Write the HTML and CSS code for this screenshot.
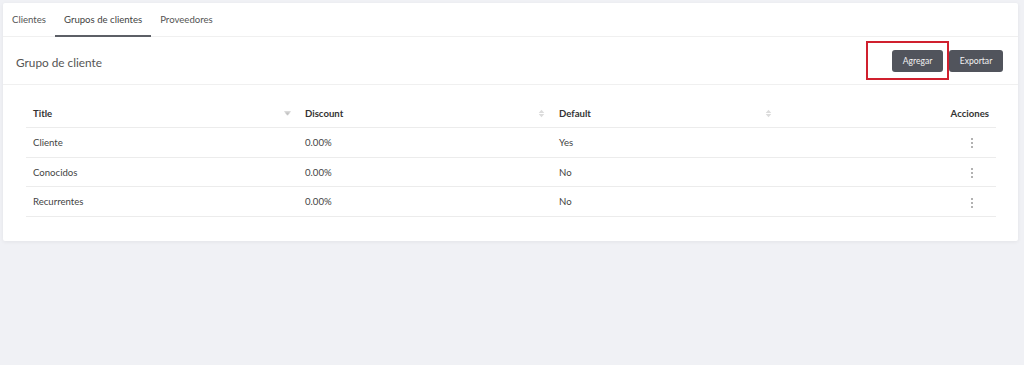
FILE: index.html
```html
<!DOCTYPE html>
<html lang="es">
<head>
<meta charset="utf-8">
<link rel="stylesheet" href="styles.css">
</head>
<body>
<div class="card">
  <nav class="tabs">
    <a class="tab">Clientes</a>
    <a class="tab active">Grupos de clientes</a>
    <a class="tab">Proveedores</a>
  </nav>
  <div class="header">
    <h1 class="title">Grupo de cliente</h1>
    <div class="actions">
      <span class="highlight"><button class="btn btn-add">Agregar</button></span>
      <button class="btn btn-export">Exportar</button>
    </div>
  </div>
  <div class="table-wrap">
    <table class="table">
      <thead>
        <tr>
          <th class="c1"><div class="th-in"><span>Title</span><svg class="ico" width="7" height="5" viewBox="0 0 7 5"><path d="M0.3 0.6h6.4M1.3 1.6h4.4L3.5 4.2z" fill="#c4c4c4" stroke="#c4c4c4" stroke-width="0.7"/></svg></div></th>
          <th class="c2"><div class="th-in"><span>Discount</span><svg class="ico" width="7" height="9" viewBox="0 0 7 9"><path d="M3.5 0.8L6.3 4H0.7zM3.5 8.2L6.3 5H0.7z" fill="#dcdcdc"/></svg></div></th>
          <th class="c3"><div class="th-in"><span>Default</span><svg class="ico" width="7" height="9" viewBox="0 0 7 9"><path d="M3.5 0.8L6.3 4H0.7zM3.5 8.2L6.3 5H0.7z" fill="#dcdcdc"/></svg></div></th>
          <th class="c4">Acciones</th>
        </tr>
      </thead>
      <tbody>
        <tr><td>Cliente</td><td>0.00%</td><td>Yes</td><td class="c4"><span class="dots"><i></i><i></i><i></i></span></td></tr>
        <tr><td>Conocidos</td><td>0.00%</td><td>No</td><td class="c4"><span class="dots"><i></i><i></i><i></i></span></td></tr>
        <tr><td>Recurrentes</td><td>0.00%</td><td>No</td><td class="c4"><span class="dots"><i></i><i></i><i></i></span></td></tr>
      </tbody>
    </table>
  </div>
</div>
</body>
</html>
```
FILE: styles.css
```css
html, body { margin: 0; padding: 0; }
body {
  background: #f0f1f5;
  font-family: Lato, "Open Sans", sans-serif;
  color: #333;
  padding: 3px 6px 0 3px;
  height: 365px;
  box-sizing: border-box;
}
.card {
  background: #fff;
  border-radius: 2px;
  box-shadow: 0 1px 4px rgba(0,0,0,0.06);
  padding-bottom: 24px;
}
.tabs {
  display: flex;
  height: 33px;
  border-bottom: 1px solid #f0f0f0;
}
.tab {
  font-size: 9.6px;
  color: #555;
  padding: 0 9px;
  display: flex;
  align-items: center;
  position: relative;
}
.tab.active { color: #444; }
.tab.active::after {
  content: "";
  position: absolute;
  left: 0; right: 0; bottom: -1px;
  height: 2px;
  background: #5c5f66;
}
.header {
  display: flex;
  align-items: center;
  justify-content: space-between;
  height: 47px;
  border-bottom: 1px solid #f0f0f0;
  padding: 0 15px 0 13px;
}
.title {
  font-size: 11.8px;
  font-weight: 400;
  color: #555;
  margin: 0;
  padding-top: 3px;
}
.actions { display: flex; align-items: center; }
.highlight {
  display: inline-flex;
  border: 2px solid #d0202e;
  padding: 7px 4px 6px 24px;
  margin: -9px 0 -9px 0;
}
.btn {
  font-family: Lato, sans-serif;
  font-size: 8.6px;
  color: #f2f2f2;
  background: #51545c;
  border: none;
  border-radius: 3px;
  height: 22px;
  padding: 0 11px;
}
.btn-add { width: 51px; padding: 0; }
.btn-export { width: 54px; padding: 0; }
.table-wrap { padding: 15px 22px 0 23px; }
.table {
  width: 100%;
  border-collapse: collapse;
  font-size: 9.6px;
}
.table th {
  font-weight: 700;
  color: #333;
  text-align: left;
  height: 27px;
  padding: 0 7px;
  border-bottom: 1px solid #ececec;
}
.th-in { display: flex; align-items: center; justify-content: space-between; }
.table td {
  height: 28.7px;
  padding: 0 7px;
  color: #444;
  border-bottom: 1px solid #ececec;
}
.c1 { width: 258px; }
.c2 { width: 240px; }
.c3 { width: 213px; }
.table .c4 { text-align: right; }
.dots { display: inline-flex; flex-direction: column; gap: 2px; margin-right: 16px; vertical-align: middle; }
.dots i { width: 2px; height: 2px; border-radius: 50%; background: #999; }
```
